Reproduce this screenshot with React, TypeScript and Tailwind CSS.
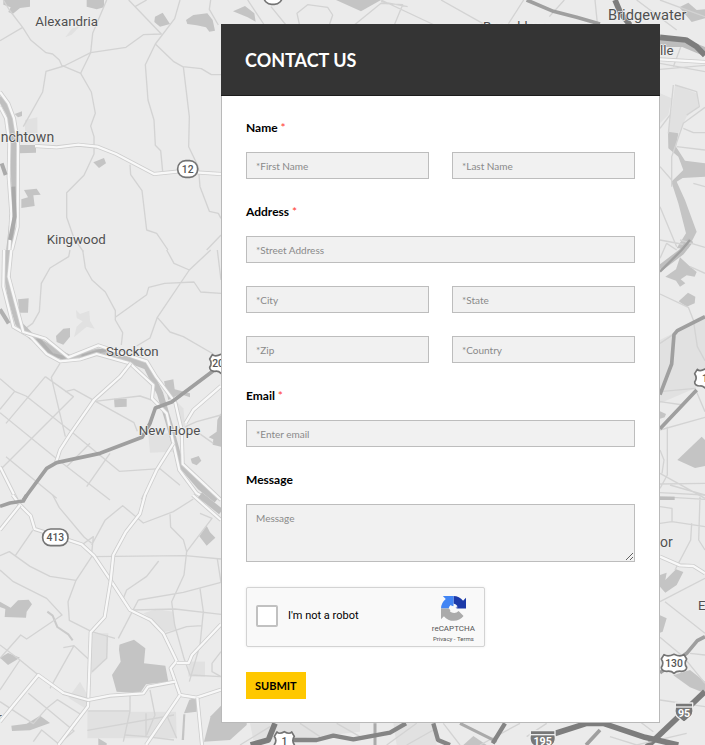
import type { ReactNode } from "react";

type RoadProps = { d: string };

const Street = ({ d }: RoadProps) => <path d={d} stroke="#d3d3d3" strokeWidth="4" />;
const Avenue = ({ d }: RoadProps) => (
  <>
    <path d={d} stroke="#cecece" strokeWidth="12" />
    <path d={d} stroke="#f8f8f8" strokeWidth="7" />
  </>
);
const Highway = ({ d }: RoadProps) => <path d={d} stroke="#9f9f9f" strokeWidth="11" />;
const Interstate = ({ d }: RoadProps) => <path d={d} stroke="#7d7d7d" strokeWidth="17" />;
const River = ({ d }: RoadProps) => <path d={d} stroke="#bfbfbf" strokeWidth="19" />;
const Area = ({ d, light = false }: RoadProps & { light?: boolean }) => (
  <path d={d} fill={light ? "#e1e1e1" : "#c4c4c4"} stroke="none" />
);

function Place({ x, y, size = 40, children }: { x: number; y: number; size?: number; children: ReactNode }) {
  return (
    <text
      x={x}
      y={y}
      fontSize={size}
      fill="#505050"
      stroke="#f0f0f0"
      strokeWidth="4"
      paintOrder="stroke"
      className="font-['Roboto',sans-serif] font-normal"
    >
      {children}
    </text>
  );
}

function RouteOval({ x, y, w, label }: { x: number; y: number; w: number; label?: string }) {
  return (
    <g>
      <rect x={x - w / 2} y={y - 25} width={w} height="50" rx="24" fill="#fff" stroke="#747474" strokeWidth="5" />
      {label && (
        <text x={x} y={y + 11} textAnchor="middle" fontSize="31" fill="#555" className="font-['Roboto',sans-serif] font-medium">
          {label}
        </text>
      )}
    </g>
  );
}

function RouteShield({ x, y, w, label }: { x: number; y: number; w: number; label: string }) {
  const h = w / 2;
  return (
    <g transform={`translate(${x} ${y})`}>
      <path
        d={`M${-h + 8} -26 Q${-h / 2} -18 0 -27 Q${h / 2} -18 ${h - 8} -26 L${h} -13 Q${h - 9} 0 ${h} 12 Q${h} 24 ${h - 16} 24 Q8 22 0 30 Q-8 22 ${-h + 16} 24 Q${-h} 24 ${-h} 12 Q${-h + 9} 0 ${-h} -13Z`}
        fill="#fff"
        stroke="#747474"
        strokeWidth="5"
      />
      <text y="12" textAnchor="middle" fontSize="31" fill="#555" className="font-['Roboto',sans-serif] font-medium">
        {label}
      </text>
    </g>
  );
}

function InterstateShield({ x, y, w, label }: { x: number; y: number; w: number; label: string }) {
  const h = w / 2;
  return (
    <g transform={`translate(${x} ${y})`}>
      <path
        d={`M${-h + 2} -28 H${h - 2} V-15 Q${h + 3} 8 ${h - 14} 18 Q10 22 0 30 Q-10 22 ${-h + 14} 18 Q${-h - 3} 8 ${-h + 2} -15Z`}
        fill="#777"
        stroke="#eee"
        strokeWidth="4"
      />
      <path d={`M${-h + 2} -16 H${h - 2}`} stroke="#eee" strokeWidth="4" />
      <text y="14" textAnchor="middle" fontSize="32" fill="#fff" className="font-['Roboto',sans-serif] font-bold">
        {label}
      </text>
    </g>
  );
}

function MapBackground() {
  return (
    <svg
      aria-hidden="true"
      viewBox="0 0 2115 2235"
      preserveAspectRatio="xMidYMin slice"
      className="absolute inset-0 -z-10 h-full w-full bg-[#ebebeb]"
      fill="none"
      strokeLinejoin="round"
    >
      {/* north west */}
      <g>
        <Area d="M10 0H90V20L60 24L38 42L25 36L32 22L10 14Z" />
        <Area d="M260 0H312V22L290 28L260 20Z" />
        <Area d="M465 50L488 38L510 72L480 80L463 66Z" />
        <Area d="M558 60L580 45L622 40L638 60L645 92L628 95L618 82L590 76L562 72Z" />
        <Area light d="M196 112L215 86L240 78L215 104Z" />
        <Area light d="M75 360L112 352V400H75Z" />
        <Area d="M56 435H108V458L58 460Z" />
        <Area d="M44 342L66 334V348L54 352Z" />
        <Area d="M280 487L312 474L318 490L297 504Z" />
        <Area d="M72 570L110 566L122 584L100 586L104 618L64 624V598L84 592Z" />
        <Street d="M0 122L68 82L28 30L10 0M68 82L92 120L138 158L158 162L178 180L185 196L242 220L272 158L278 100L320 0" />
        <Street d="M70 380L128 276L138 214L192 198L272 158L378 142L430 104L484 102L386 0M405 20L440 0" />
        <Street d="M540 0L524 56L466 132L436 194L444 300L462 360L466 436L482 452L488 515M466 132L520 184L548 200L604 206L634 224L663 224" />
        <Street d="M632 0L628 28L655 75M550 200L568 350L566 440L595 500L600 560L628 634L655 640L663 655" />
        <Street d="M242 220L274 276L286 340L272 378L282 410V462L252 526L200 578V652L222 715L250 755" />
        <Street d="M390 494L392 524L426 572L440 690L470 700L504 750M663 705L620 750" />
        <Avenue d="M105 438L170 442L235 434L292 440L348 462L462 522L540 514L663 522" />
        <River d="M0 290L28 340L40 410L42 500L44 590L36 680L28 750" />
        <Avenue d="M0 276L25 310L42 355L54 430L53 680L36 750" />
        <Avenue d="M0 320L18 355L28 430L26 530L34 640L28 750" />
        <path d="M5 490L17 525M40 560L44 650L30 720" stroke="#aaa" strokeWidth="12" />
        <Place x={106} y={77}>Alexandria</Place>
        <Place x={2} y={427} size={42}>nchtown</Place>
        <Place x={140} y={733}>Kingwood</Place>
        <RouteOval x={563} y={507} w={60} label="12" />
      </g>

      {/* Delaware river, Stockton and New Hope */}
      <g transform="translate(0 750)">
        <Area d="M54 148L86 145L84 188H58Z" />
        <Area d="M168 258L190 236L210 234V260L190 284L170 276Z" />
        <Area light d="M228 180L240 192L268 182L270 212L284 236L260 230L222 262L230 230L248 214L230 204Z" />
        <Area d="M342 446H380V470L344 472Z" />
        <Area d="M492 394L520 388L524 418L570 430V442L540 432L505 450Z" />
        <Area light d="M445 555L505 550L520 605L450 608Z" />
        <Area light d="M520 445L550 475L556 535L530 510Z" />
        <Area d="M572 626L596 618L604 632L590 646L576 640Z" />
        <Area d="M663 490L652 510L650 545L626 562L640 568L638 584L663 590Z" />
        <Street d="M210 0L206 20L150 54L124 100L118 185L98 220L70 240M248 0L256 54L276 90L316 126L346 182V210L368 248L364 285" />
        <Street d="M346 202L440 134L446 112L494 100L582 96L602 126L663 130M500 0L522 40L568 60L632 0M568 60L472 202L450 264L410 288M472 202L510 246L550 260L640 312M652 0L663 90" />
        <Street d="M0 386L44 424L78 438L220 550L358 664L480 656L540 706M44 424L0 478M136 380L18 520M136 380L220 440L0 660M180 340L154 382L196 560M195 425L222 418L402 518L412 544M284 454L420 438L455 450" />
        <Street d="M0 488L170 626L330 750M18 620L170 745M270 580L200 650M330 610L260 710M663 495L590 515L556 530M556 530L590 545L640 580" />
        <River d="M22 0L18 60L34 150L55 220L95 260L150 295L210 325L295 305L350 315L440 350L480 430L510 530L540 640L600 710L650 750" />
        <path d="M0 178L26 220M112 264L156 315L205 326M245 320L318 298" stroke="#b0b0b0" strokeWidth="12" />
        <Avenue d="M12 0L10 110L40 230L92 260L140 312L180 334L240 328L290 312L390 340L460 405L456 445L500 490L538 660L590 730L625 750" />
        <Avenue d="M34 0L26 80L70 246L136 266L205 322L295 286L440 334L468 380L526 458L545 540L548 642L610 700L663 750" />
        <Avenue d="M392 340L360 380L282 450L212 550L180 600L168 638" />
        <Avenue d="M520 580L470 660L428 750M663 408L580 480L556 520M0 650L50 750" />
        <Highway d="M70 750L140 655L170 638L300 610L426 562L450 520L466 474L515 456L640 362" />
        <Place x={318} y={318}>Stockton</Place>
        <Place x={416} y={555}>New Hope</Place>
        <RouteShield x={663} y={340} w={68} label="202" />
      </g>

      {/* south west */}
      <g transform="translate(0 1485)">
        <Area light d="M275 415L325 415L322 490L270 540L268 610L240 560L205 608L272 650H528L530 730H262V640Z" />
        <Area light d="M430 355L470 342L520 350L525 405L490 412L460 375Z" />
        <Area light d="M565 500H615V545H565Z" />
        <Area d="M355 450L402 434L436 460L432 505L496 512L505 560L438 568L420 594L350 590L336 540L362 500Z" />
        <path d="M332 440L360 430L356 476L334 478Z" fill="#ebebeb" />
        <Area d="M0 320L32 338L54 316L86 314L96 328L80 350L78 368L14 366L16 342L0 336Z" />
        <Area d="M0 488L24 474L60 488L24 510Z" />
        <Area d="M34 692L80 686L120 662L150 684L90 706L36 708Z" />
        <Area d="M598 124L620 92L630 112L646 128L620 152Z" />
        <Area d="M663 632L632 664L612 740L690 735L740 690V632Z" />
        <Area d="M568 614L590 608V650L552 655Z" />
        <Area d="M545 735L550 658H556L552 735Z" />
        <Area d="M295 730L320 745V752H295Z" />
        <path d="M142 350L158 362L172 396L205 418L218 436" stroke="#cacaca" strokeWidth="6" />
        <Street d="M158 0L178 38L252 126L275 145M98 106L46 182M0 182L28 170L90 214L150 244L228 256L204 320L208 376L275 410L345 430M0 225L40 260L140 310L186 360L80 432L62 420L0 490" />
        <Street d="M228 256L275 185L556 182L663 192M275 150L315 76L368 32L430 84L520 50L580 12M245 150L280 125L275 175M510 58L512 96L550 134L560 170L552 240L515 320L524 390L552 490M370 310L380 285L440 244L476 198M415 315L550 292L663 262M415 315L355 430" />
        <Street d="M400 345L525 342L663 358M600 280L610 350L600 450L568 560M490 418L560 395L606 392M652 192L663 262M560 170L636 70L600 55M0 450L60 495L0 585M60 495L115 540M150 580L222 452L265 492M222 452L190 458" />
        <Street d="M85 595L140 640L100 686L0 620M140 640L172 614L245 660M140 640L222 708L172 750M100 740L125 705L180 750M265 648H390L370 740M262 706L522 660M322 420L320 490L276 530M390 600V648M450 585L465 660L440 720M500 660L530 730" />
        <Street d="M663 470L636 505V530L663 545M552 490L570 540L663 545M438 655V725L522 735M375 720L440 725" />
        <Avenue d="M38 0L60 30L92 62L104 102L160 120L245 148L282 182L332 256L390 345L452 375L490 415L530 498L512 520L540 600L590 608L663 584" />
        <Avenue d="M435 0L420 56L378 110L340 180L332 256L314 366L272 412L264 634L175 750" />
        <Avenue d="M0 105L60 30M0 680L115 540L190 594L264 615L330 602L430 595L444 575L525 560M540 600L438 750M592 608L606 750M530 504H566L576 480L663 388" />
        <Avenue d="M578 0L663 75" />
        <River d="M600 0L663 50" />
        <Highway d="M80 0L70 18L30 24L0 34" />
        <Place x={-8} y={680}>r</Place>
        <RouteOval x={166} y={127} w={76} label="413" />
      </g>

      {/* north edge */}
      <g transform="translate(663 0)">
        <Area d="M345 0H480L420 34Z" />
        <Area d="M36 34L72 18L100 40L104 65L80 52Z" />
        <Street d="M80 0L130 75M150 20L195 75M235 72L228 40L260 14L320 22L335 45L325 75M400 75L480 10L545 14L520 75M480 0L640 75M480 5L560 20" />
        <Street d="M660 0L785 70M860 75L908 0M985 50L1030 0" />
        <RouteOval x={156} y={-12} w={56} />
        <Place x={786} y={94}>Branchburg</Place>
      </g>

      {/* north east */}
      <g transform="translate(1680 0)">
        <Area d="M358 22L385 8L410 30L435 28V55L395 66L375 42Z" />
        <Area light d="M345 255L410 280L415 320L380 350L355 400L325 400Z" />
        <Area light d="M300 280L335 295L325 345L300 370Z" />
        <Area d="M324 395L355 400L348 440L375 482L435 490V530L368 534L350 545L375 600L410 695L385 745H350L378 700L355 610L334 545L370 510L355 470L325 445Z" />
        <Street d="M105 0L112 70M230 0L350 90M300 0L435 50M300 190L435 215M300 208L435 196M370 120L340 200M345 255L410 275L418 320L380 345M435 322L370 370L335 470V560M300 385L330 345M350 440L435 450M370 385L400 398H435M300 620L350 740M300 500L335 540M340 255L325 400M300 720L380 735M400 550L435 560" />
        <Highway d="M-100 0L-20 34L50 52L120 72" />
        <Interstate d="M165 0L182 40L210 75" />
        <path d="M300 128H370L435 155" stroke="#bdbdbd" strokeWidth="26" />
        <Interstate d="M300 112L378 120L410 140L435 166" />
        <Avenue d="M300 178L435 186" />
        <Place x={144} y={60} size={44}>Bridgewater</Place>
        <Place x={300} y={164}>lle</Place>
      </g>

      {/* east */}
      <g transform="translate(1920 720)">
        <Area light d="M60 300L195 230V420L165 445L60 490Z" />
        <Area d="M76 110L108 88L120 52L145 75L170 96L164 110L140 106L122 118L136 130L120 140L108 122Z" />
        <Area d="M116 184L144 158L166 170L164 190L140 200Z" />
        <Area d="M60 514L78 522L74 532L60 536Z" />
        <Area d="M112 660L185 590L195 600V678L165 684Z" />
        <River d="M60 85L125 35L152 0" />
        <Street d="M60 55L80 10L110 30M120 0L195 22M150 80L195 100M60 162L145 202L160 240L172 320L195 362M60 310L105 280M60 455L165 445L195 515M60 485L130 495M60 570L195 532M82 560V705L60 745M60 630L72 660L66 700M60 732L195 730M60 700L195 775M90 735L195 765" />
        <path d="M60 95L125 30L150 0" stroke="#a0a0a0" strokeWidth="7" />
        <Highway d="M60 464L95 372L102 284L112 272L195 230M60 566L170 450" />
        <RouteShield x={195} y={414} w={62} label="1" />
      </g>

      {/* south east */}
      <g transform="translate(1920 1470)">
        <Area d="M60 255L80 248L76 270L108 238L130 246L110 285L76 308L60 290Z" />
        <Area d="M60 376L80 385L68 425L60 428Z" />
        <Area d="M100 556L150 540L195 575V610L150 592Z" />
        <Street d="M60 50L96 55V96M60 100L96 95L195 110M60 8L195 15M60 20L195 28M155 100L152 150L105 240M180 20L176 150L195 180M195 265L60 335M75 335L195 430M60 442L130 500L195 580M60 630L195 650M150 490L195 495M0 695L40 725" />
        <Avenue d="M60 200L120 226L160 228L195 250" />
        <path d="M60 25H104" stroke="#bdbdbd" strokeWidth="10" />
        <Highway d="M60 548L140 490L172 452L195 440" />
        <Interstate d="M195 605L0 790" />
        <Place x={60} y={172} size={42}>or</Place>
        <Place x={174} y={360}>E</Place>
        <RouteShield x={102} y={520} w={76} label="130" />
        <InterstateShield x={132} y={667} w={56} label="95" />
      </g>

      {/* south edge */}
      <g transform="translate(660 2100)">
        <Area d="M520 70H640L650 135H530Z" light />
        <Area d="M730 135L760 108L800 135Z" />
        <Area light d="M90 70H420V95L250 115L100 120Z" />
        <Street d="M60 135L150 80M240 70L300 110M350 70L420 110M500 135L590 70M560 135L640 90M670 70L720 135M780 135L900 70M980 70L920 110M1170 110L1250 135M1250 135L1400 100" />
        <path d="M465 70V135M720 70L830 125" stroke="#aaa" strokeWidth="9" />
        <Highway d="M1140 90L1098 135" />
        <Interstate d="M92 135L145 120L165 70" />
        <path d="M200 120H290L340 107L400 118L510 98L558 70M640 70L654 120L690 135M855 70L818 130" stroke="#858585" strokeWidth="13" />
        <Interstate d="M1000 102L1100 70H1150L1275 112L1375 135" />
        <RouteShield x={193} y={122} w={60} label="1" />
        <InterstateShield x={968} y={120} w={78} label="195" />
      </g>
    </svg>
  );
}

function RecaptchaLogo() {
  return (
    <svg viewBox="0 0 64 64" className="h-[25px] w-[25px]" aria-hidden="true">
      <path d="M64 31.9V4.7l-7.5 7.5A32 32 0 0 0 32 0v19.5a16 16 0 0 1 10.5 6.7L33 32z" fill="#1c3aa9" />
      <path d="M32 0H4.8l7.4 7.4A32 32 0 0 0 0 32h19.5a16 16 0 0 1 5.5-9.2L32 32z" fill="#4285f4" />
      <path d="M0 32v27.2l7.5-7.5A32 32 0 0 0 57.7 51L45 38.5a16 16 0 0 1-22.5.5L30 32z" fill="#ababab" />
      <path d="M20 31l8-1-3-6 7 2 4-4 1 7 6 1-6 4-2 7-5-4-4 3z" fill="#f9f9f9" />
    </svg>
  );
}

const labelClass = "mb-[14px] block text-xs leading-5 font-bold text-black";
const fieldClass =
  "block w-full min-w-0 rounded-none border border-[#bdbdbd] bg-[#f1f1f1] px-[9px] text-[10px] text-[#333] placeholder:text-[#8a8a8a] focus:outline-none focus:border-[#777]";

function Field({ name, placeholder, id, type = "text" }: { name: string; placeholder: string; id?: string; type?: string }) {
  return (
    <input id={id} type={type} name={name} aria-label={placeholder.replace("*", "")} placeholder={placeholder} className={`${fieldClass} h-[27px]`} />
  );
}

const Required = () => <span className="font-normal text-[#ff3b30]">*</span>;

export default function App() {
  return (
    <div className="relative isolate flex min-h-screen items-start justify-end overflow-hidden pt-6 pr-[45px] pb-[22px] pl-6 font-['Lato','Liberation_Sans',sans-serif]">
      <MapBackground />
      <main className="w-full max-w-[439px] border border-t-0 border-[#b9b9b9] bg-white">
        <header className="-mx-px flex h-[72px] items-center border-b border-[#1c1c1c] bg-[#343434] px-6">
          <h1 className="text-lg leading-6 font-bold text-white">CONTACT US</h1>
        </header>
        <form className="px-6 pt-[22px] pb-[23px]" onSubmit={(e) => e.preventDefault()}>
          <div className="flex flex-col gap-[23px]">
            <div>
              <label htmlFor="first-name" className={labelClass}>
                Name <Required />
              </label>
              <div className="grid grid-cols-2 gap-[23px]">
                <Field id="first-name" name="firstName" placeholder="*First Name" />
                <Field name="lastName" placeholder="*Last Name" />
              </div>
            </div>
            <div>
              <label htmlFor="street" className={labelClass}>
                Address <Required />
              </label>
              <div className="grid grid-cols-2 gap-[23px]">
                <div className="col-span-2">
                  <Field id="street" name="street" placeholder="*Street Address" />
                </div>
                <Field name="city" placeholder="*City" />
                <Field name="state" placeholder="*State" />
                <Field name="zip" placeholder="*Zip" />
                <Field name="country" placeholder="*Country" />
              </div>
            </div>
            <div>
              <label htmlFor="email" className={labelClass}>
                Email <Required />
              </label>
              <Field id="email" type="email" name="email" placeholder="*Enter email" />
            </div>
            <div>
              <label htmlFor="message" className={labelClass}>
                Message
              </label>
              <textarea id="message" name="message" placeholder="Message" className={`${fieldClass} h-[58px] resize py-[5px] leading-4`} />
            </div>
          </div>
          <div className="mt-[25px] flex flex-col items-start gap-[25px]">
            <div className="flex h-[60px] w-full max-w-[239px] items-center justify-between rounded-[2px] border border-[#d3d3d3] bg-[#f9f9f9] px-[9px] font-['Roboto',sans-serif] shadow-[0_0_3px_rgba(0,0,0,0.08)]">
              <div className="flex items-center gap-[10px] pb-[2px]">
                <input id="robot" type="checkbox" className="h-[22px] w-[22px] appearance-none rounded-[2px] border-2 border-[#c1c1c1] bg-white checked:bg-[#4285f4]" />
                <label htmlFor="robot" className="text-[11px] leading-4 text-black">
                  I'm not a robot
                </label>
              </div>
              <div className="flex flex-col items-center pt-1 text-[#555]">
                <RecaptchaLogo />
                <span className="mt-[3px] text-[8px] leading-[10px]">reCAPTCHA</span>
                <span className="text-[6px] leading-[9px]">
                  <a href="#privacy">Privacy</a> - <a href="#terms">Terms</a>
                </span>
              </div>
            </div>
            <button type="submit" className="h-[27px] bg-[#ffc800] px-[9px] text-[11px] leading-4 font-bold text-black">
              SUBMIT
            </button>
          </div>
        </form>
      </main>
    </div>
  );
}
